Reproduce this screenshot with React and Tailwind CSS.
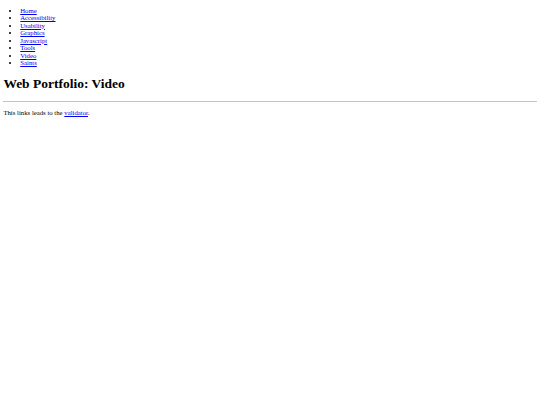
export default function App() {
  const items = ["Home", "Accessibility", "Usability", "Graphics", "Javascript", "Tools", "Video", "Saints"];
  return (
    <div className="min-h-[405px] w-[540px] bg-white px-[3.375px] pt-[6.75px] text-black font-['Liberation_Serif',serif] text-[6.75px] leading-[7.5px]">
      <ul className="list-disc pl-[16.875px]">
        {items.map((t) => (
          <li key={t}>
            <a href="#" className="text-[#0000ee] underline">{t}</a>
          </li>
        ))}
      </ul>
      <h1 className="mt-[9px] mb-[9.5px] text-[13.5px] leading-[15.5px] font-bold">Web Portfolio: Video</h1>
      <hr className="border-0 border-t border-[#c4c4c4]" />
      <p className="mt-[7px]">
        This links leads to the <a href="#" className="text-[#0000ee] underline">validator</a>.
      </p>
    </div>
  );
}
